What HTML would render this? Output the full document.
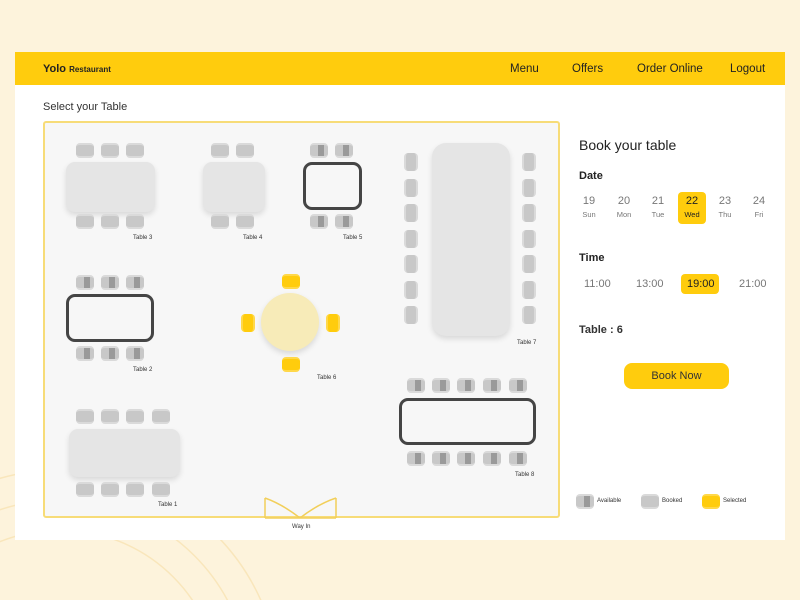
<!DOCTYPE html>
<html style="overflow:hidden;width:800px;height:600px"><head><meta charset="utf-8"><style>
*{margin:0;padding:0;box-sizing:border-box}
body{width:800px;height:600px;background:#fdf3dc;font-family:"Liberation Sans",sans-serif;position:relative;overflow:hidden;color:#222}
.card{position:absolute;left:15px;top:52px;width:770px;height:488px;background:#fff}
.hdr{position:absolute;left:15px;top:52px;width:770px;height:33px;background:#ffcc0d}
.a{position:absolute;white-space:nowrap}
.floor{position:absolute;left:43px;top:121px;width:517px;height:397px;background:#f7f7f7;border:2px solid #f7dc78;border-radius:3px}
.t{position:absolute;background:#e5e5e5;border-radius:9px;box-shadow:0 3px 6px rgba(0,0,0,.12)}
.o{position:absolute;border:3px solid #454545;border-radius:9px}
.c{position:absolute;width:18px;height:15px;background:#c8c8c8;border-radius:4px;border-top:2px solid #dadada;border-bottom:2px solid #dadada}
.c.b::after{content:"";position:absolute;left:8px;top:0;width:6px;height:100%;background:#9a9a9a}
.v{position:absolute;width:14px;height:18px;background:#c8c8c8;border-radius:4px;border-left:2px solid #dadada;border-right:2px solid #dadada}
.y{background:#ffcc0d;border-color:#ffd84a}
.lb{position:absolute;font-size:6px;color:#333}
</style></head><body>
<svg style="position:absolute;left:0;top:0" width="800" height="600"><g fill="none" stroke="#f9e6bb" stroke-width="1.5"><circle cx="60" cy="690" r="160"/><circle cx="60" cy="690" r="190"/><circle cx="60" cy="690" r="220"/></g></svg>
<div class="card"></div>
<div class="hdr"></div>
<div class="a" style="left:43px;top:63px;font-size:11px;font-weight:bold">Yolo <span style="font-size:8px">Restaurant</span></div>
<div class="a" style="left:510px;top:63px;font-size:11.5px">Menu</div>
<div class="a" style="left:572px;top:63px;font-size:11.5px">Offers</div>
<div class="a" style="left:637px;top:63px;font-size:11.5px">Order Online</div>
<div class="a" style="left:730px;top:63px;font-size:11.5px">Logout</div>
<div class="a" style="left:43px;top:101px;font-size:11px;color:#333">Select your Table</div>
<div class="floor"></div>
<div class="t" style="left:66px;top:162px;width:89px;height:50px"></div>
<i class="c" style="left:76px;top:143px"></i><i class="c" style="left:101px;top:143px"></i><i class="c" style="left:126px;top:143px"></i>
<i class="c" style="left:76px;top:214px"></i><i class="c" style="left:101px;top:214px"></i><i class="c" style="left:126px;top:214px"></i>
<div class="lb" style="left:133px;top:235px">Table 3</div>
<div class="t" style="left:203px;top:162px;width:62px;height:50px"></div>
<i class="c" style="left:211px;top:143px"></i><i class="c" style="left:236px;top:143px"></i>
<i class="c" style="left:211px;top:214px"></i><i class="c" style="left:236px;top:214px"></i>
<div class="lb" style="left:243px;top:235px">Table 4</div>
<div class="o" style="left:303px;top:162px;width:59px;height:48px"></div>
<i class="c b" style="left:310px;top:143px"></i><i class="c b" style="left:335px;top:143px"></i>
<i class="c b" style="left:310px;top:214px"></i><i class="c b" style="left:335px;top:214px"></i>
<div class="lb" style="left:343px;top:235px">Table 5</div>
<div class="o" style="left:66px;top:294px;width:88px;height:48px"></div>
<i class="c b" style="left:76px;top:275px"></i><i class="c b" style="left:101px;top:275px"></i><i class="c b" style="left:126px;top:275px"></i>
<i class="c b" style="left:76px;top:346px"></i><i class="c b" style="left:101px;top:346px"></i><i class="c b" style="left:126px;top:346px"></i>
<div class="lb" style="left:133px;top:367px">Table 2</div>
<div style="position:absolute;left:261px;top:293px;width:58px;height:58px;border-radius:50%;background:#f7ebb8;box-shadow:0 3px 6px rgba(0,0,0,.12)"></div>
<i class="c y" style="left:282px;top:274px"></i><i class="c y" style="left:282px;top:357px"></i>
<i class="v y" style="left:241px;top:314px"></i><i class="v y" style="left:326px;top:314px"></i>
<div class="lb" style="left:317px;top:375px">Table 6</div>
<div class="t" style="left:432px;top:143px;width:78px;height:193px;border-radius:14px"></div>
<i class="v" style="left:404px;top:153px"></i><i class="v" style="left:404px;top:179px"></i><i class="v" style="left:404px;top:204px"></i><i class="v" style="left:404px;top:230px"></i><i class="v" style="left:404px;top:255px"></i><i class="v" style="left:404px;top:281px"></i><i class="v" style="left:404px;top:306px"></i>
<i class="v" style="left:522px;top:153px"></i><i class="v" style="left:522px;top:179px"></i><i class="v" style="left:522px;top:204px"></i><i class="v" style="left:522px;top:230px"></i><i class="v" style="left:522px;top:255px"></i><i class="v" style="left:522px;top:281px"></i><i class="v" style="left:522px;top:306px"></i>
<div class="lb" style="left:517px;top:340px">Table 7</div>
<div class="o" style="left:399px;top:398px;width:137px;height:47px"></div>
<i class="c b" style="left:407px;top:378px"></i><i class="c b" style="left:432px;top:378px"></i><i class="c b" style="left:457px;top:378px"></i><i class="c b" style="left:483px;top:378px"></i><i class="c b" style="left:509px;top:378px"></i>
<i class="c b" style="left:407px;top:451px"></i><i class="c b" style="left:432px;top:451px"></i><i class="c b" style="left:457px;top:451px"></i><i class="c b" style="left:483px;top:451px"></i><i class="c b" style="left:509px;top:451px"></i>
<div class="lb" style="left:515px;top:472px">Table 8</div>
<div class="t" style="left:69px;top:429px;width:111px;height:48px"></div>
<i class="c" style="left:76px;top:409px"></i><i class="c" style="left:101px;top:409px"></i><i class="c" style="left:126px;top:409px"></i><i class="c" style="left:152px;top:409px"></i>
<i class="c" style="left:76px;top:482px"></i><i class="c" style="left:101px;top:482px"></i><i class="c" style="left:126px;top:482px"></i><i class="c" style="left:152px;top:482px"></i>
<div class="lb" style="left:158px;top:502px">Table 1</div>
<svg style="position:absolute;left:262px;top:496px" width="80" height="26"><path d="M3 2 Q20 8 38 22 M38 22 Q56 8 74 2 M3 2 V22 M74 2 V22 M3 22 H74" fill="none" stroke="#f2cf5a" stroke-width="1.5"/></svg>
<div class="lb" style="left:292px;top:524px">Way In</div>
<div class="a" style="left:579px;top:137px;font-size:14px;color:#222">Book your table</div>
<div class="a" style="left:579px;top:170px;font-size:11px;font-weight:bold">Date</div>
<div style="position:absolute;left:678px;top:192px;width:28px;height:32px;background:#ffcc0d;border-radius:4px"></div>
<div class="a" style="left:579px;top:195px;width:200px;font-size:11px;color:#777">
<span class="a" style="left:0;width:20px;text-align:center">19</span><span class="a" style="left:35px;width:20px;text-align:center">20</span><span class="a" style="left:69px;width:20px;text-align:center">21</span><span class="a" style="left:103px;width:20px;text-align:center;color:#222">22</span><span class="a" style="left:136px;width:20px;text-align:center">23</span><span class="a" style="left:170px;width:20px;text-align:center">24</span></div>
<div class="a" style="left:579px;top:210px;width:200px;font-size:7.5px;color:#777">
<span class="a" style="left:-5px;width:30px;text-align:center">Sun</span><span class="a" style="left:30px;width:30px;text-align:center">Mon</span><span class="a" style="left:64px;width:30px;text-align:center">Tue</span><span class="a" style="left:98px;width:30px;text-align:center;color:#222">Wed</span><span class="a" style="left:131px;width:30px;text-align:center">Thu</span><span class="a" style="left:165px;width:30px;text-align:center">Fri</span></div>
<div class="a" style="left:579px;top:252px;font-size:11px;font-weight:bold">Time</div>
<div style="position:absolute;left:681px;top:274px;width:38px;height:20px;background:#ffcc0d;border-radius:4px"></div>
<div class="a" style="left:584px;top:278px;font-size:11px;color:#777">11:00</div>
<div class="a" style="left:636px;top:278px;font-size:11px;color:#777">13:00</div>
<div class="a" style="left:687px;top:278px;font-size:11px;color:#222">19:00</div>
<div class="a" style="left:739px;top:278px;font-size:11px;color:#777">21:00</div>
<div class="a" style="left:579px;top:324px;font-size:11px;font-weight:bold;color:#333">Table : 6</div>
<div style="position:absolute;left:624px;top:363px;width:105px;height:26px;background:#ffcc0d;border-radius:8px;font-size:11px;text-align:center;line-height:26px;color:#333">Book Now</div>
<i class="c b" style="left:576px;top:494px"></i><div class="lb" style="left:597px;top:498px">Available</div>
<i class="c" style="left:641px;top:494px"></i><div class="lb" style="left:662px;top:498px">Booked</div>
<i class="c y" style="left:702px;top:494px"></i><div class="lb" style="left:723px;top:498px">Selected</div>
</body></html>
